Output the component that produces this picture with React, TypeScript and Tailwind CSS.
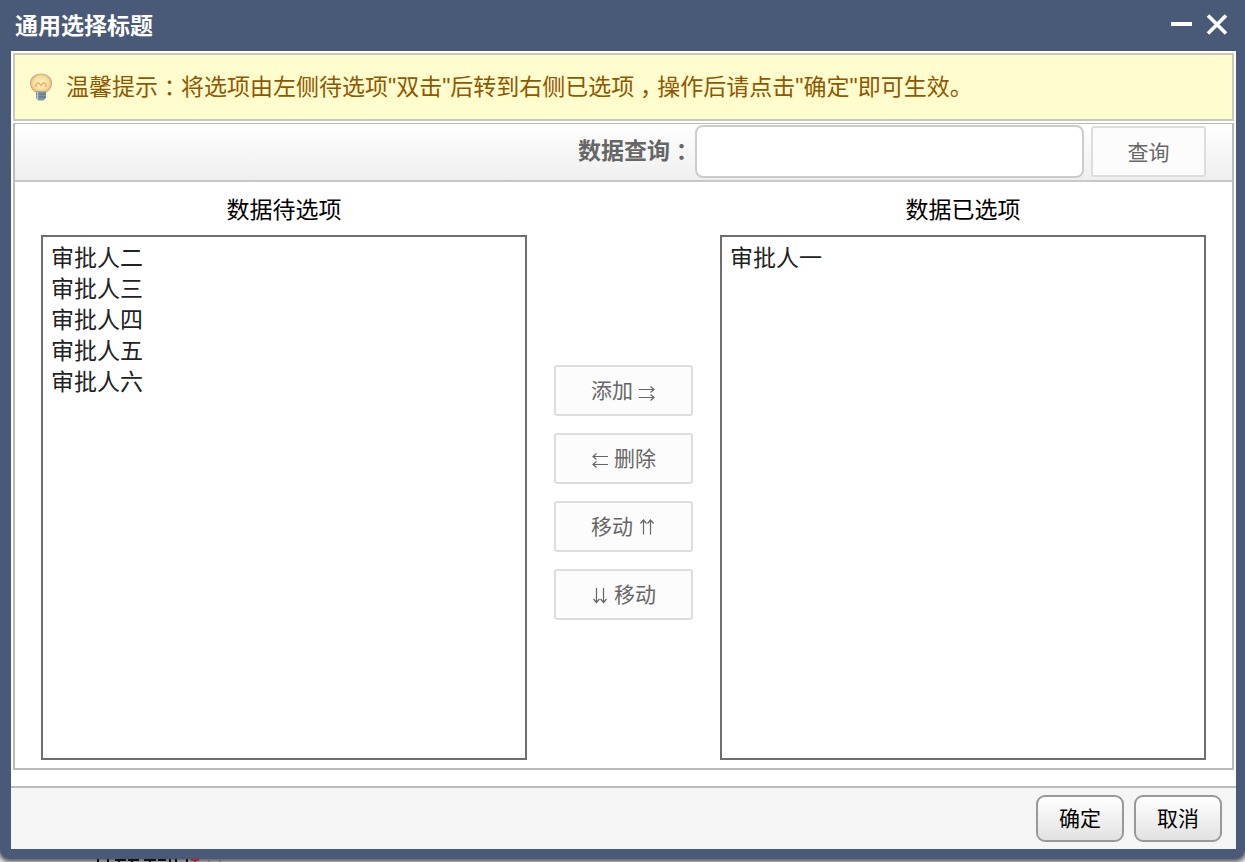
import { useState } from "react";

const pendingOptions = ["审批人二", "审批人三", "审批人四", "审批人五", "审批人六"];
const chosenOptions = ["审批人一"];

const moveButtons = [
    { text: "添加", arrow: "right", arrowFirst: false },
    { text: "删除", arrow: "left", arrowFirst: true },
    { text: "移动", arrow: "up", arrowFirst: false },
    { text: "移动", arrow: "down", arrowFirst: true },
];

const arrowPaths: Record<string, string> = {
    right: "M1 8.500H16M12.500 5.500L16 8.500L12.500 11.500M1 16.500H16M12.500 13.500L16 16.500L12.500 19.500",
    left: "M17 7.500H2M5.500 4.500L2 7.500L5.500 10.500M17 15.500H2M5.500 12.500L2 15.500L5.500 18.500",
    up: "M5.500 17.500V3M2.500 6.500L5.500 3L8.500 6.500M12.500 17.500V3M9.500 6.500L12.500 3L15.500 6.500",
    down: "M5.500 3V17.500M2.500 14L5.500 17.500L8.500 14M12.500 3V17.500M9.500 14L12.500 17.500L15.500 14",
};

function Arrow({ name }: { name: string }) {
    return (
        <svg width="18" height="20" viewBox="0 0 18 20" fill="none" stroke="currentColor" strokeWidth="1.2" aria-hidden="true">
            <path d={arrowPaths[name]} />
        </svg>
    );
}

function Bulb() {
    return (
        <svg width="24" height="30" viewBox="0 0 24 30" aria-hidden="true">
            <defs>
                <radialGradient id="glass" cx="0.5" cy="0.5" r="0.55">
                    <stop offset="0" stopColor="#fff3d4" />
                    <stop offset="0.6" stopColor="#fbe0a0" />
                    <stop offset="1" stopColor="#edbd6a" />
                </radialGradient>
            </defs>
            <path d="M12 2C6 2 1.500 6 1.500 11.500C1.500 15.500 4 18 6.800 20H17.200C20 18 22.500 15.500 22.500 11.500C22.500 6 18 2 12 2Z" fill="url(#glass)" stroke="#c9ad92" strokeWidth="1.2" />
            <path d="M7 15V12L9.500 10.500L12 13.500L14.500 10.500L17 12V15" fill="none" stroke="#e8b05a" strokeWidth="1.3" />
            <path d="M7 19.500H17V26L14.500 28.500H9.500L7 26Z" fill="#7f94a6" />
            <path d="M7 22H17M7 25H17" stroke="#56708a" strokeWidth="1" />
            <path d="M8.500 20V27" stroke="#b9c8d4" strokeWidth="1.5" />
        </svg>
    );
}

// Full-width punctuation centred in its square
function Mark({ children }: { children: string }) {
    return <span className="inline-block w-[1em] text-center [font-feature-settings:'halt']">{children}</span>;
}

function ListBox({ id, label, options }: { id: string; label: string; options: string[] }) {
    return (
        <div className="flex min-w-0 flex-1 flex-col">
            <label htmlFor={id} className="flex h-[53px] items-center justify-center pt-1 text-[23px] leading-[31px] text-black">
                {label}
            </label>
            <select
                id={id}
                multiple
                className="h-[525px] w-full overflow-auto border-2 border-[#6e6e6e] bg-white px-2 py-[2px] text-[23px] text-[#222]"
            >
                {options.map((option) => (
                    <option key={option} className="h-[31px] leading-[31px]">
                        {option}
                    </option>
                ))}
            </select>
        </div>
    );
}

export default function App() {
    const [query, setQuery] = useState("");

    return (
        <div className="h-screen overflow-hidden bg-[#ececee] font-['Liberation_Sans','Noto_Sans_CJK_SC',sans-serif]">
            <div className="rounded-b-[10px] bg-[#485a77] px-[11px] pr-[9px] pb-[10px] shadow-[0_1px_4px_2px_rgba(0,0,0,0.6)]">
                <header className="flex h-[51px] items-center justify-between pr-2 pl-1">
                    <h1 className="pt-[2px] text-[23px] font-bold text-white">通用选择标题</h1>
                    <div className="flex items-center gap-3 text-white">
                        <button type="button" aria-label="最小化">
                            <svg width="24" height="24" viewBox="0 0 24 24" aria-hidden="true">
                                <path d="M1 10H22" stroke="currentColor" strokeWidth="4" />
                            </svg>
                        </button>
                        <button type="button" aria-label="关闭">
                            <svg width="22" height="24" viewBox="0 0 22 24" aria-hidden="true">
                                <path d="M2 1.500L20 19.500M20 1.500L2 19.500" stroke="currentColor" strokeWidth="3.6" />
                            </svg>
                        </button>
                    </div>
                </header>

                <main className="bg-white px-0.5 pt-0.5 pb-4">
                    <p className="flex h-[68px] items-center gap-[13px] border-2 border-[#c8c8bc] bg-[#fffccd] pl-[14px] text-[23px] text-[#8f5700]">
                        <Bulb />
                        <span>
                            温馨提示<Mark>：</Mark>将选项由左侧待选项"双击"后转到右侧已选项<Mark>，</Mark>操作后请点击"确定"即可生效。
                        </span>
                    </p>

                    <section className="mt-0.5 border-2 border-t border-[#bbb]">
                        <form
                            className="flex h-[58px] items-center justify-end border-b-2 border-[#c8c8c8] bg-linear-to-b from-white to-[#efefef] pr-[26px] pb-px"
                            onSubmit={(e) => e.preventDefault()}
                        >
                            <label htmlFor="query" className="mr-[2px] text-[23px] font-bold text-[#666]">
                                数据查询<Mark>：</Mark>
                            </label>
                            <input
                                id="query"
                                type="text"
                                value={query}
                                onChange={(e) => setQuery(e.target.value)}
                                className="mr-[7px] h-[53px] w-[389px] rounded-lg border-2 border-[#ccc] bg-white px-3 text-[23px]"
                            />
                            <button type="submit" className="h-[51px] w-[115px] rounded-[3px] border-2 border-[#ddd] bg-[#fcfcfc] pt-[2px] text-[21px] text-[#666]">
                                查询
                            </button>
                        </form>

                        <div className="flex px-[26px] pb-2">
                            <ListBox id="pending" label="数据待选项" options={pendingOptions} />
                            <div className="flex w-[193px] shrink-0 flex-col items-center gap-[17px] pt-[183px]">
                                {moveButtons.map((button) => (
                                    <button
                                        key={button.arrow}
                                        type="button"
                                        className="flex h-[51px] w-[139px] items-center justify-center gap-[5px] rounded-[3px] border-2 border-[#ddd] bg-[#fcfcfc] text-[21px] text-[#666]"
                                    >
                                        {button.arrowFirst && <Arrow name={button.arrow} />}
                                        {button.text}
                                        {!button.arrowFirst && <Arrow name={button.arrow} />}
                                    </button>
                                ))}
                            </div>
                            <ListBox id="chosen" label="数据已选项" options={chosenOptions} />
                        </div>
                    </section>
                </main>

                <footer className="flex h-[63px] items-center justify-end gap-[10px] border-t-2 border-[#bbb] bg-[#f5f5f5] pr-[14px]">
                    <button type="button" className="h-[47px] w-[88px] rounded-[9px] border-2 border-[#999] bg-linear-to-b from-white to-[#e2e2e2] text-[21px] text-black">
                        确定
                    </button>
                    <button type="button" className="h-[47px] w-[88px] rounded-[9px] border-2 border-[#999] bg-linear-to-b from-white to-[#e2e2e2] text-[21px] text-black">
                        取消
                    </button>
                </footer>
            </div>

            {/* Edge of the form row that the dialog covers */}
            <svg className="ml-24" width="130" height="3" viewBox="0 0 130 3" aria-hidden="true">
                <path d="M2 0V3M12 0V3M19 1H30M23 0V3M32 1H43M36 0V3M48 1H60M54 0V3M62 1H70M74 0V3M80 0V3M91 0V3" stroke="#111" strokeWidth="2" />
                <path d="M95 1H103M99 0V3" stroke="#b3222a" strokeWidth="2" />
                <path d="M113 0V3M124 0V3" stroke="#666" />
            </svg>
        </div>
    );
}
